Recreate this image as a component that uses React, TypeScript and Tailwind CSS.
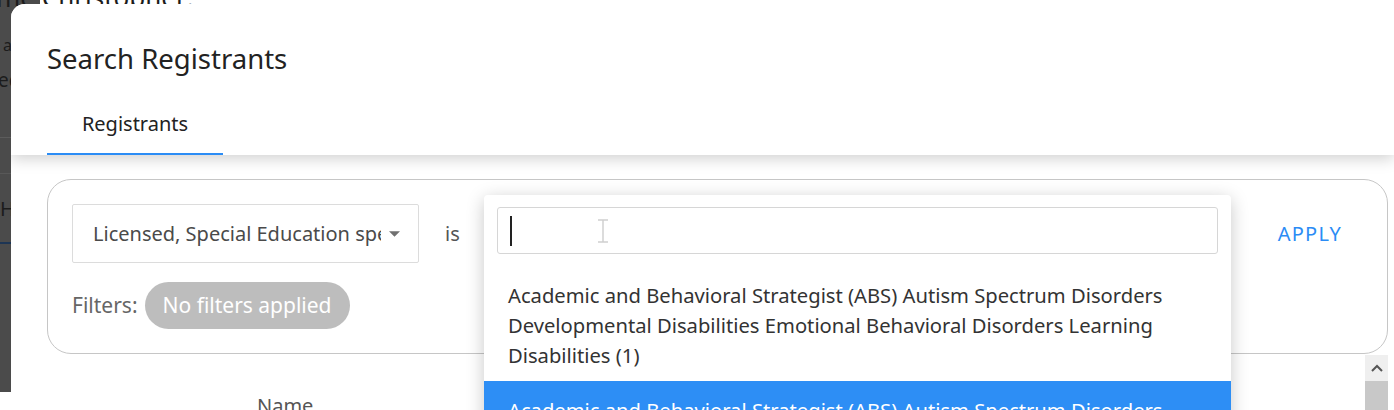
import React from "react";

const font = { fontFamily: '"Noto Sans", "Open Sans", sans-serif' };

const OPTIONS = [
  "Academic and Behavioral Strategist (ABS) Autism Spectrum Disorders Developmental Disabilities Emotional Behavioral Disorders Learning Disabilities (1)",
  "Academic and Behavioral Strategist (ABS) Autism Spectrum Disorders Developmental Disabilities Emotional Behavioral Disorders (2)",
];

const BackgroundPage = () => (
  <div className="h-full w-full bg-[#4b4b4b] text-[#1c1c1c]">
    <div className="-mt-[18px] -ml-[4px] whitespace-nowrap text-[26px] leading-[30px]">
      me Christopher:
    </div>
    <div className="mt-[21px] pl-[3px] text-[16px] leading-[24px]">a</div>
    <div className="mt-[11px] -ml-[2px] text-[19px] leading-[24px]">ec</div>
    <div className="mt-[45px] h-px w-full bg-[#5c5c5c]" />
    <div className="mt-[35px] h-px w-full bg-[#585858]" />
    <div className="mt-[23px] text-[20px] leading-[24px]">H</div>
    <div className="mt-[21px] h-[2px] w-full bg-[#1d3554]" />
  </div>
);

const SelectBox = () => (
  <div className="flex h-[59px] w-[347px] items-center rounded-[2px] border border-[#dcdcdc] bg-white pl-[20px] pr-[18px]">
    <div className="flex-1 overflow-hidden whitespace-nowrap text-[20px] text-[#4a4a4a]">
      Licensed, Special Education specialty
    </div>
    <svg width="11" height="6" viewBox="0 0 12 6" className="ml-[8px]">
      <path d="M0 0 L12 0 L6 6 Z" fill="#707070" />
    </svg>
  </div>
);

const Dropdown = () => (
  <div className="absolute left-[436px] top-[15px] w-[747px] rounded-[4px] bg-white shadow-[0_4px_18px_rgba(0,0,0,0.22)]">
    <div className="px-[13px] pt-[12px]">
      <div className="relative flex h-[47px] items-center rounded-[3px] border border-[#d6d6d6] pl-[12px]">
        <div className="h-[30px] w-[2px] bg-[#222]" />
        <svg width="14" height="24" viewBox="0 0 14 24" className="ml-[84px]">
          <path d="M2 1 H12 M7 1 V23 M2 23 H12" stroke="#d0d0d0" strokeWidth="1.5" fill="none" />
        </svg>
      </div>
    </div>
    <div className="mt-[12px]">
      {OPTIONS.map((o, i) => (
        <div
          key={i}
          className={`px-[24px] pt-[14px] pb-[11px] text-[20.2px] leading-[30px] ${
            i === 1 ? "bg-[#2d8ef5] text-white" : "text-[#333]"
          }`}
        >
          {o}
        </div>
      ))}
    </div>
  </div>
);

const FilterCard = () => (
  <div className="relative mr-[6px] h-[175px] rounded-[24px] border border-[#c6c6c6] bg-white px-[24px] pt-[24px]">
    <div className="flex items-center">
      <SelectBox />
      <div className="ml-[26px] text-[20px] text-[#555]">is</div>
      <div className="flex-1" />
      <button className="mr-[21px] text-[20px] tracking-[1.2px] text-[#2b8cf5]">APPLY</button>
    </div>
    <div className="mt-[19px] flex items-center">
      <span className="text-[21px] text-[#666]">Filters:</span>
      <span className="ml-[7px] flex h-[47px] items-center rounded-full bg-[#bdbdbd] px-[18px] text-[21px] text-white">
        No filters applied
      </span>
    </div>
    <Dropdown />
  </div>
);

const App = () => {
  return (
    <div className="relative h-[410px] w-[1394px] overflow-hidden" style={font}>
      <div className="h-full w-[40px]">
        <BackgroundPage />
      </div>
      <div className="absolute left-[11px] top-[4px] right-0 bottom-0 overflow-hidden rounded-tl-[14px] bg-white">
        <div className="relative z-10 bg-white pl-[36px] pt-[36px] shadow-[0_4px_14px_rgba(0,0,0,0.18)]">
          <h2 className="text-[27.5px] leading-[38px] text-[#222]">Search Registrants</h2>
          <div className="mt-[32px] flex">
            <div className="flex w-[176px] flex-col items-center">
              <span className="pb-[15px] text-[20px] leading-[28px] text-[#222]">Registrants</span>
              <div className="h-[2px] w-full bg-[#2b8cf5]" />
            </div>
          </div>
        </div>
        <div className="flex">
          <div className="flex-1 pl-[36px] pt-[24px]">
            <FilterCard />
            <div className="mt-[38px] pl-[210px] text-[20px] leading-[28px] text-[#555]">Name</div>
          </div>
        </div>
        <div className="absolute right-[6px] top-[351px] w-[23px]">
          <div className="flex h-[26px] items-center justify-center bg-[#efefef]">
            <svg width="12" height="8" viewBox="0 0 12 8">
              <path d="M1 7 L6 2 L11 7" stroke="#555" strokeWidth="2" fill="none" />
            </svg>
          </div>
          <div className="h-[60px] bg-[#c8c8c8]" />
        </div>
      </div>
    </div>
  );
};

export default App;
